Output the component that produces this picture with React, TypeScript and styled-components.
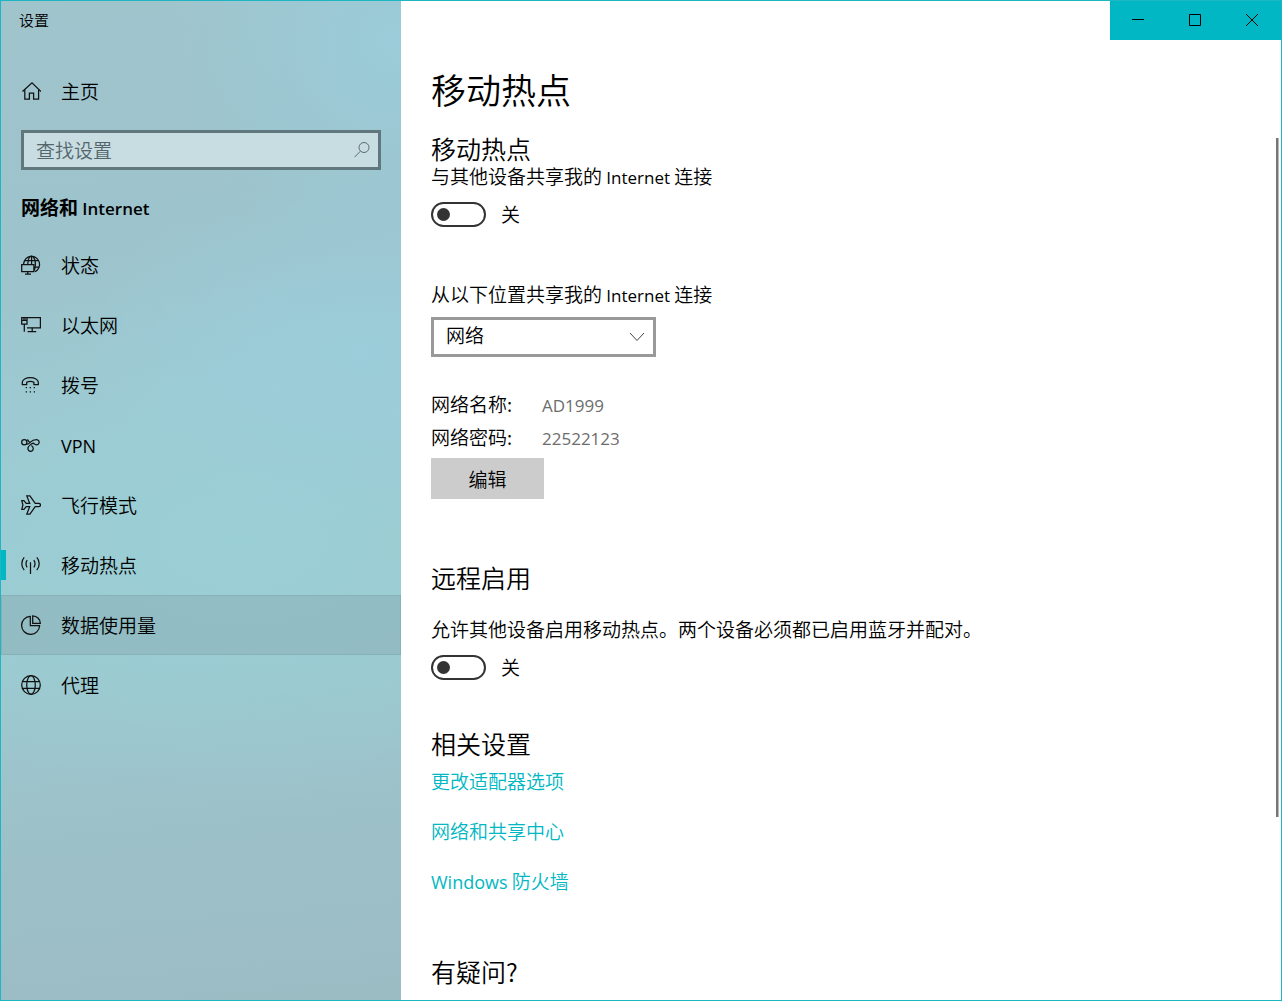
import React, { useState } from "react";
import styled, { createGlobalStyle } from "styled-components";

const accent = "#00b7c3";
const accentEdge = "#1fb6c3";

const GlobalStyle = createGlobalStyle`
  * {
    box-sizing: border-box;
  }

  body {
    margin: 0;
    background: #fff;
    color: #000;
    font: 19px/24px "Noto Sans CJK SC", "Open Sans", sans-serif;
    font-weight: 350;
  }

  h1, h2, p, ul, dl, dd {
    margin: 0;
    padding: 0;
    font-weight: inherit;
  }

  ul {
    list-style: none;
  }

  button, input, select {
    font: inherit;
    color: inherit;
    border-radius: 0;
  }

  a {
    color: inherit;
    text-decoration: none;
  }
`;

const Window = styled.div`
  display: flex;
  height: 100vh;
  border: 1px solid ${accentEdge};
  overflow: hidden;
`;

const Latin = styled.span<{ $strong?: boolean; $large?: boolean }>`
  font-family: "Open Sans", sans-serif;
  font-size: ${(p) => (p.$large ? 18 : 17)}px;
  font-weight: ${(p) => (p.$strong ? 600 : 400)};
  line-height: 1;
`;

/* Sidebar */

const Sidebar = styled.aside`
  flex: none;
  width: 400px;
  background:
    radial-gradient(ellipse 60% 22% at 100% 4%, rgba(153, 206, 220, 0.8), transparent),
    radial-gradient(ellipse 70% 18% at 90% 35%, rgba(154, 206, 220, 0.8), transparent),
    radial-gradient(ellipse 110% 26% at 60% 54%, rgba(154, 208, 214, 0.85), transparent),
    linear-gradient(175deg, #a0c4cc 0%, #9dc3cc 22%, #9ec8d1 40%, #9ccad1 62%, #9dc1c9 80%, #9cbcc4 100%);
`;

const WindowTitle = styled.div`
  padding-left: 18px;
  font-size: 15px;
  line-height: 38px;
`;

const NavLink = styled.a<{ $hovered?: boolean; $active?: boolean }>`
  position: relative;
  display: flex;
  align-items: center;
  gap: 20px;
  height: 60px;
  padding: 0 20px;
  background: ${(p) => (p.$hovered ? "rgba(120, 140, 148, 0.25)" : "transparent")};
  box-shadow: ${(p) => (p.$hovered ? "inset 0 0 0 1px rgba(90, 125, 132, 0.18)" : "none")};

  &::before {
    content: "";
    display: ${(p) => (p.$active ? "block" : "none")};
    position: absolute;
    left: 0;
    width: 5px;
    height: 30px;
    background: ${accent};
  }
`;

const HomeLink = styled(NavLink)`
  margin-top: 22px;
`;

const NavIcon = styled.svg.attrs({ viewBox: "0 0 20 20", "aria-hidden": true })`
  flex: none;
  width: 20px;
  height: 20px;
  fill: none;
  stroke: #111;
  stroke-width: 1.25;
`;

const SearchBox = styled.label`
  display: flex;
  align-items: center;
  height: 40px;
  margin: 9px 20px 0;
  padding: 0 8px 0 12px;
  border: 3px solid #5f777d;
  background: #c7dde2;
`;

const SearchInput = styled.input`
  flex: 1;
  min-width: 0;
  padding: 0;
  border: 0;
  outline: 0;
  background: transparent;

  &::placeholder {
    color: #54666b;
    opacity: 1;
  }
`;

const SearchIcon = styled.svg`
  width: 16px;
  height: 16px;
  fill: none;
  stroke: #586b70;
`;

const CategoryTitle = styled.h2`
  height: 24px;
  margin: 25px 20px 16px;
  font-size: 19px;
  font-weight: 700;
`;

/* Main pane */

const Main = styled.main`
  display: flex;
  flex: 1;
  flex-direction: column;
  min-width: 0;
  background: #fff;
`;

const CaptionBar = styled.div`
  display: flex;
  flex: none;
  justify-content: flex-end;
  height: 39px;
`;

const CaptionButton = styled.button`
  display: grid;
  place-items: center;
  width: 57px;
  padding: 0;
  border: 0;
  background: ${accent};

  svg {
    width: 13px;
    height: 13px;
    fill: none;
    stroke: #000;
  }
`;

const Body = styled.div`
  display: flex;
  flex: 1;
  min-height: 0;
  padding: 0 2px 0 30px;
`;

const Content = styled.div`
  flex: 1;
  min-width: 0;
  padding-top: 25px;
  overflow: hidden;
`;

const ScrollThumb = styled.div`
  width: 3px;
  height: 679px;
  margin-top: 98px;
  border-right: 1px solid #b8b8b8;
  background: #767676;
`;

const PageTitle = styled.h1`
  font-size: 35px;
  line-height: 48px;
`;

const Section = styled.section<{ $space: number }>`
  margin-top: ${(p) => p.$space}px;
`;

const Heading = styled.h2`
  font-size: 25px;
  line-height: 32px;
`;

const Description = styled.p`
  margin-top: 24px;
`;

const ToggleRow = styled.label`
  display: flex;
  align-items: center;
  gap: 15px;
  width: max-content;
  height: 26px;
  margin-top: 13px;
`;

const Switch = styled.input`
  display: flex;
  align-items: center;
  appearance: none;
  width: 55px;
  height: 25px;
  margin: 0;
  padding: 0 4px;
  border: 2px solid #333;
  border-radius: 13px;

  &::before {
    content: "";
    width: 13px;
    height: 13px;
    border-radius: 50%;
    background: #333;
  }

  &:checked {
    justify-content: flex-end;
    border-color: ${accent};
    background: ${accent};
  }

  &:checked::before {
    background: #fff;
  }
`;

const Field = styled.div`
  display: grid;
  justify-items: start;
  gap: 11px;
  margin-top: 55px;
`;

const SelectFrame = styled.div`
  display: grid;
  align-items: center;
  width: 225px;
  height: 40px;

  > * {
    grid-area: 1 / 1;
  }

  svg {
    justify-self: end;
    width: 16px;
    height: 10px;
    margin-right: 11px;
    fill: none;
    stroke: #444;
    pointer-events: none;
  }
`;

const Select = styled.select`
  appearance: none;
  width: 100%;
  height: 40px;
  padding: 0 32px 4px 12px;
  border: 3px solid #999;
  background: #fff;
`;

const Details = styled.dl`
  display: grid;
  grid-template-columns: 111px 1fr;
  margin-top: 30px;
  line-height: 33px;
`;

const DetailValue = styled.dd`
  color: #6d6d6d;
`;

const EditButton = styled.button`
  width: 113px;
  height: 41px;
  margin-top: 5px;
  padding: 0;
  border: 0;
  background: #ccc;
`;

const LinkList = styled.ul`
  display: grid;
  justify-items: start;
  gap: 26px;
  margin-top: 10px;
  color: ${accent};
`;

const Link = styled.a`
  display: block;
`;

const icons = {
  home: (
    <>
      <path d="M1.5 10.5 11 1.8l9 8.7" />
      <path d="M3.8 8.8v9.4h4.6v-6h4.2v6h5V8.8" />
    </>
  ),
  status: (
    <>
      <path d="M2.6 9A8 8 0 1 1 14 16.6" />
      <path d="M6.8 9C7 4.5 8.6 1 10.6 1s3.800 3.700 3.800 8c0 2.600-.4 4.800-1.200 6.400" />
      <path d="M3.600 5.600h14M13 12h5M10.600 1v8" />
      <path d="M.7 9.700h12.200v6.900H.7zM6.800 16.600V19M4 19.200h6" />
    </>
  ),
  ethernet: (
    <>
      <path d="M6 2.700h13.400v10.200H6M11.200 12.900v3.700M6.600 16.700h8.600" />
      <path d="M.7 2.700H6v6.400H.7zM.7 5.300H6M3.300 9.100v7.600" />
      <path d="M2 4h2.800" />
    </>
  ),
  dialup: (
    <>
      <path d="M1.300 9.600V7.300C1.300 4.600 5 2.700 9.300 2.700s8 1.900 8 4.600v2.300h-4.400V7.200c-1-.5-2.200-.8-3.600-.8s-2.600.3-3.600.8v2.400z" />
      <path d="M4.700 12.600H6m2.700 0H10m2.700 0H14M4.700 16.800H6m2.700 0H10m2.700 0H14" />
    </>
  ),
  vpn: (
    <>
      <circle cx="3.300" cy="7.300" r="2.600" />
      <path d="M5.400 8.800c1.700.9 2.600-.2 4-1.700 1.700-1.800 3-2.600 6.100-2.600a2.700 2.700 0 1 1-2.300 4.200" />
      <path d="M13.300 8.700c-1-.9-2.400-.3-3.800.9-1.700 1.400-2.600 2.500-2.600 4a2.700 2.700 0 1 0 5.400 0c0-1.500-.7-2.300-1.900-3.200" />
      <path d="m6.300 4.500 2.300 2.800" />
    </>
  ),
  airplane: (
    <path d="M.8 5.700h2.100l2.300 2.600h3.500L5.800.9h3.100l5.300 7.400h3.200c1.300 0 2.100.8 2.100 1.700s-.8 1.700-2.100 1.700h-3.200L8.900 19.100H5.800l2.900-7.400H5.200l-2.300 2.600H.8L1.900 10z" />
  ),
  hotspot: (
    <path d="M9.500 7.200V19M6.200 5.100c-1.600 1.900-1.600 5.300 0 7.200M12.800 5.100c1.600 1.900 1.600 5.300 0 7.200M3.200 2.300c-3.200 3.500-3.200 9.300 0 12.800M15.800 2.300c3.200 3.500 3.200 9.300 0 12.800" />
  ),
  dataUsage: (
    <>
      <path d="M9.300 1.400a9 9 0 1 0 9.300 9.300H9.300z" />
      <path d="M11.700.8v7.500h7.600C19.200 4.200 15.900.9 11.700.8z" />
    </>
  ),
  proxy: (
    <>
      <circle cx="10" cy="10" r="9.300" />
      <ellipse cx="10" cy="10" rx="4.300" ry="9.300" />
      <path d="M1.400 6.700h17.200M1.400 13.300h17.200" />
    </>
  ),
};

const navItems: { icon: keyof typeof icons; label: React.ReactNode; active?: boolean; hovered?: boolean }[] = [
  { icon: "status", label: "状态" },
  { icon: "ethernet", label: "以太网" },
  { icon: "dialup", label: "拨号" },
  { icon: "vpn", label: <Latin $large>VPN</Latin> },
  { icon: "airplane", label: "飞行模式" },
  { icon: "hotspot", label: "移动热点", active: true },
  { icon: "dataUsage", label: "数据使用量", hovered: true },
  { icon: "proxy", label: "代理" },
];

function Toggle({ name }: { name: string }) {
  const [on, setOn] = useState(false);
  return (
    <ToggleRow>
      <Switch type="checkbox" role="switch" name={name} checked={on} onChange={() => setOn(!on)} />
      <span>{on ? "开" : "关"}</span>
    </ToggleRow>
  );
}

export default function App() {
  return (
    <>
      <GlobalStyle />
      <Window>
        <Sidebar>
          <WindowTitle>设置</WindowTitle>
          <HomeLink href="#home">
            <NavIcon>{icons.home}</NavIcon>
            <span>主页</span>
          </HomeLink>
          <SearchBox>
            <SearchInput type="text" placeholder="查找设置" aria-label="查找设置" />
            <SearchIcon viewBox="0 0 16 16" aria-hidden="true">
              <circle cx="10" cy="5.500" r="5" />
              <path d="M6.400 9.200.5 15.200" />
            </SearchIcon>
          </SearchBox>
          <CategoryTitle>
            网络和 <Latin $strong>Internet</Latin>
          </CategoryTitle>
          <nav>
            <ul>
              {navItems.map((item) => (
                <li key={item.icon}>
                  <NavLink href={`#${item.icon}`} $active={item.active} $hovered={item.hovered}>
                    <NavIcon>{icons[item.icon]}</NavIcon>
                    <span>{item.label}</span>
                  </NavLink>
                </li>
              ))}
            </ul>
          </nav>
        </Sidebar>

        <Main>
          <CaptionBar>
            <CaptionButton aria-label="最小化">
              <svg viewBox="0 0 13 13"><path d="M0 5.500h12" /></svg>
            </CaptionButton>
            <CaptionButton aria-label="最大化">
              <svg viewBox="0 0 13 13"><path d="M.5.5h11v11H.5z" /></svg>
            </CaptionButton>
            <CaptionButton aria-label="关闭">
              <svg viewBox="0 0 13 13"><path d="m0 0 12 12M12 0 0 12" /></svg>
            </CaptionButton>
          </CaptionBar>
          <Body>
            <Content>
              <PageTitle>移动热点</PageTitle>

              <Section $space={19}>
                <Heading>移动热点</Heading>
                <p>
                  与其他设备共享我的 <Latin>Internet</Latin> 连接
                </p>
                <Toggle name="hotspot" />
                <Field>
                  <label htmlFor="source">
                    从以下位置共享我的 <Latin>Internet</Latin> 连接
                  </label>
                  <SelectFrame>
                    <Select id="source" defaultValue="网络">
                      <option>网络</option>
                    </Select>
                    <svg viewBox="0 0 16 10" aria-hidden="true"><path d="m1 1 7 7.500L15 1" /></svg>
                  </SelectFrame>
                </Field>
                <Details>
                  <dt>网络名称:</dt>
                  <DetailValue><Latin>AD1999</Latin></DetailValue>
                  <dt>网络密码:</dt>
                  <DetailValue><Latin>22522123</Latin></DetailValue>
                </Details>
                <EditButton>编辑</EditButton>
              </Section>

              <Section $space={62}>
                <Heading>远程启用</Heading>
                <Description>允许其他设备启用移动热点。两个设备必须都已启用蓝牙并配对。</Description>
                <Toggle name="remote" />
              </Section>

              <Section $space={47}>
                <Heading>相关设置</Heading>
                <LinkList>
                  <li><Link href="#adapter">更改适配器选项</Link></li>
                  <li><Link href="#sharing">网络和共享中心</Link></li>
                  <li><Link href="#firewall"><Latin $large>Windows</Latin> 防火墙</Link></li>
                </LinkList>
              </Section>

              <Section $space={62}>
                <Heading>有疑问?</Heading>
              </Section>
            </Content>
            <ScrollThumb />
          </Body>
        </Main>
      </Window>
    </>
  );
}
